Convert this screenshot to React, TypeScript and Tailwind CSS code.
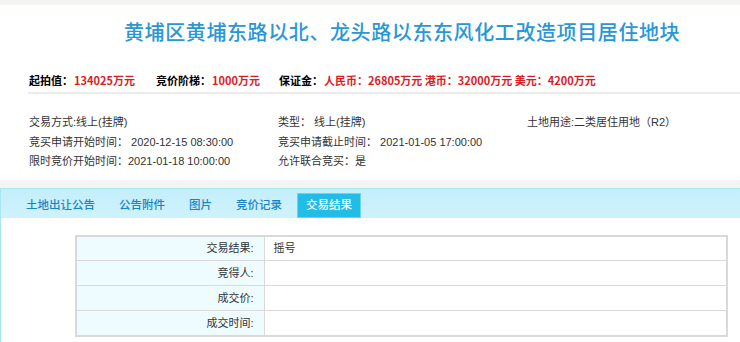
import React from "react";

const details = [
  ["交易方式:线上(挂牌)", "类型： 线上(挂牌)", "土地用途:二类居住用地（R2）"],
  ["竞买申请开始时间： 2020-12-15 08:30:00", "竞买申请截止时间： 2021-01-05 17:00:00", ""],
  ["限时竞价开始时间：2021-01-18 10:00:00", "允许联合竞买：是", ""],
];

const tabs = ["土地出让公告", "公告附件", "图片", "竞价记录", "交易结果"];

const results = [
  { label: "交易结果:", value: "摇号" },
  { label: "竞得人:", value: "" },
  { label: "成交价:", value: "" },
  { label: "成交时间:", value: "" },
];

const App = () => {
  return (
    <div className="w-[740px] h-[342px] overflow-hidden bg-white font-['Liberation_Sans','Noto_Sans_CJK_SC',sans-serif] text-[#333]">
      <div className="h-[5px] bg-[#f3f5f2]" />

      {/* title */}
      <h1 className="mt-[12px] pl-[124px] text-[20px] leading-[30px] tracking-[0.6px] text-[#2997d6] font-['Noto_Sans_CJK_SC',sans-serif] font-medium">
        黄埔区黄埔东路以北、龙头路以东东风化工改造项目居住地块
      </h1>

      {/* price line */}
      <div className="mt-[25px] pl-[29px] flex items-center text-[11px] leading-[16px] font-bold font-['Noto_Sans_CJK_SC',sans-serif]">
        <span className="text-black">起拍值：</span>
        <span className="text-[#dc1c24] ml-[1px]">134025万元</span>
        <span className="text-black ml-[21px]">竞价阶梯：</span>
        <span className="text-[#dc1c24] ml-[1px]">1000万元</span>
        <span className="text-black ml-[19px]">保证金：</span>
        <span className="text-[#dc1c24] ml-[1px]">人民币：26805万元 港币：32000万元 美元：4200万元</span>
      </div>
      <div className="mt-[4px] ml-[28px] h-[2px] bg-[#ebebeb]" />

      {/* details */}
      <div className="pt-[19px] pl-[29px]">
        {details.map((row, i) => (
          <div key={i} className="grid grid-cols-[249px_249px_1fr] text-[11px] leading-[19.5px] text-[#333]">
            {row.map((cell, j) => (
              <span key={j} className="whitespace-nowrap">{cell}</span>
            ))}
          </div>
        ))}
      </div>

      <div className="mt-[8px] h-[8px] bg-[#f3f5f2]" />

      {/* tab panel */}
      <div className="border-t border-l border-[#a9e6f4] bg-gradient-to-b from-[#c3effb] to-white">
        <div className="pt-[4px] pl-[17px] flex gap-2 h-[29px] font-['Noto_Sans_CJK_SC',sans-serif] font-medium text-[11.5px]">
          {tabs.map((t, i) =>
            i === tabs.length - 1 ? (
              <span key={t} className="h-[25px] px-2 flex items-center bg-[#22bde6] text-white border border-[#6fd3ee] -mx-px">
                {t}
              </span>
            ) : (
              <span key={t} className="h-[25px] px-2 flex items-center text-[#1a82c9]">
                {t}
              </span>
            )
          )}
        </div>

        <div className="pt-[17px] pl-[74px] pr-[12px] pb-[10px] bg-white">
          <table className="w-[653px] border-collapse border-2 border-[#d9d9d9] text-[11px] text-[#333]">
            <tbody>
              {results.map((r) => (
                <tr key={r.label} className="h-[25px]">
                  <td className="w-[188px] bg-[#effcff] border border-[#d9d9d9] text-right pr-[10px]">{r.label}</td>
                  <td className="border border-[#d9d9d9] pl-[9px]">{r.value}</td>
                </tr>
              ))}
            </tbody>
          </table>
        </div>
      </div>
    </div>
  );
};

export default App;
